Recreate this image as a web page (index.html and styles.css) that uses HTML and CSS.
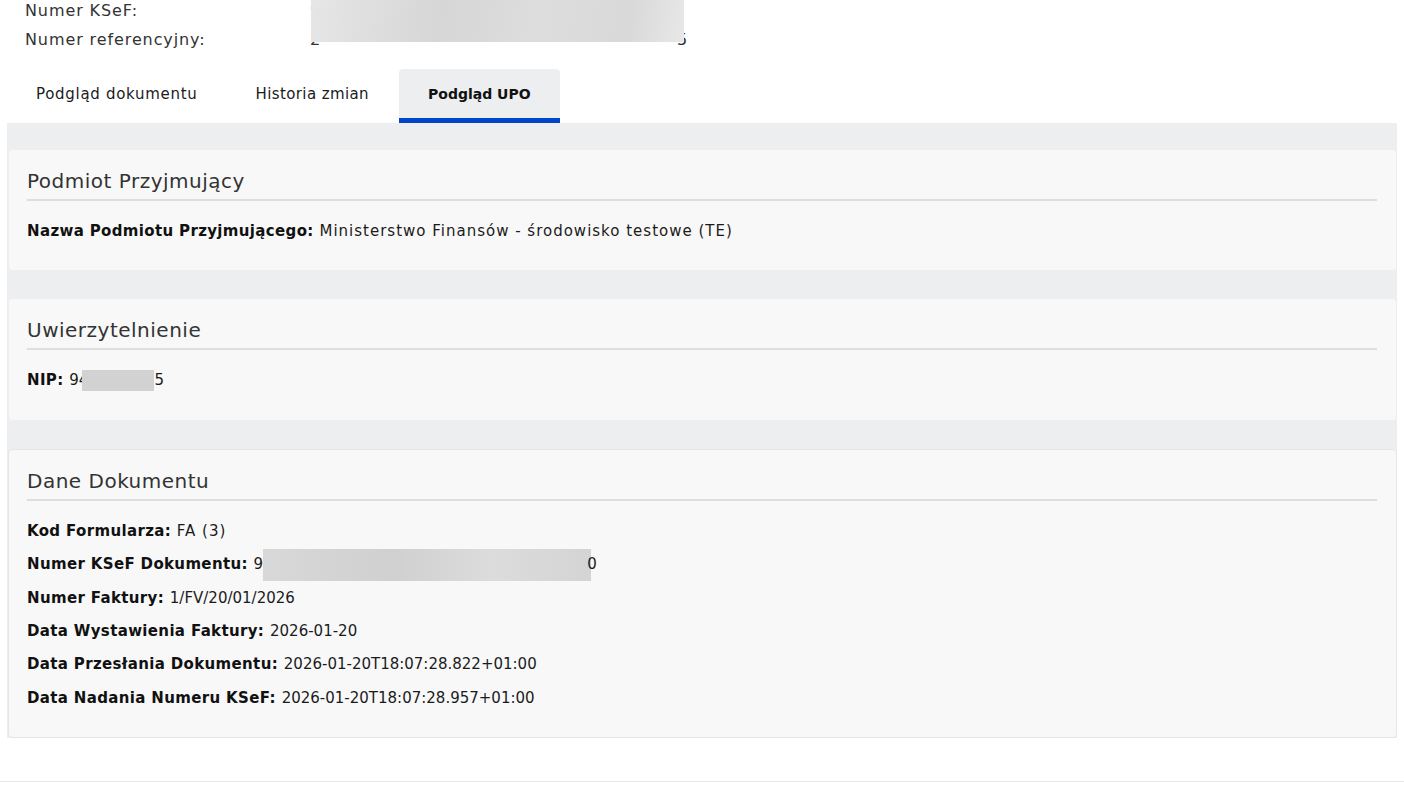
FILE: index.html
```html
<!DOCTYPE html>
<html lang="pl">
<head>
    <meta charset="UTF-8">
    <meta name="viewport" content="width=device-width, initial-scale=1.0">
    <title>Podgląd UPO</title>
    <link rel="stylesheet" href="styles.css">
</head>
<body>
    <div class="meta">
        <div class="meta-row">
            <span class="meta-label">Numer KSeF:</span>
            <span class="meta-value">9</span>
        </div>
        <div class="meta-row">
            <span class="meta-label">Numer referencyjny:</span>
            <span class="meta-value">2<span class="meta-end">5</span></span>
        </div>
        <div class="meta-blur"></div>
    </div>

    <nav class="tabs">
        <a class="tab">Podgląd dokumentu</a>
        <a class="tab">Historia zmian</a>
        <a class="tab active">Podgląd UPO</a>
    </nav>

    <main class="upo">
        <section class="card">
            <h3>Podmiot Przyjmujący</h3>
            <div class="rows">
                <p><b>Nazwa Podmiotu Przyjmującego:</b> Ministerstwo Finansów - środowisko testowe (TE)</p>
            </div>
        </section>
        <section class="card">
            <h3>Uwierzytelnienie</h3>
            <div class="rows">
                <p><b>NIP:</b> <span class="num">94<span class="redact redact-nip"></span>5</span></p>
            </div>
        </section>
        <section class="card last">
            <h3>Dane Dokumentu</h3>
            <div class="rows">
                <p><b>Kod Formularza:</b> FA (3)</p>
                <p><b>Numer KSeF Dokumentu:</b> <span class="num">9<span class="redact redact-ksef"></span>0</span></p>
                <p><b>Numer Faktury:</b> <span class="num">1/FV/20/01/2026</span></p>
                <p><b>Data Wystawienia Faktury:</b> <span class="num">2026-01-20</span></p>
                <p><b>Data Przesłania Dokumentu:</b> <span class="num">2026-01-20T18:07:28.822+01:00</span></p>
                <p><b>Data Nadania Numeru KSeF:</b> <span class="num">2026-01-20T18:07:28.957+01:00</span></p>
            </div>
        </section>
    </main>

    <footer class="foot"></footer>
</body>
</html>
```

FILE: styles.css
```css
body {
    font-family: "DejaVu Sans", "Noto Sans", sans-serif;
    margin: 0;
    color: #1b1b1b;
    background: #fff;
}
.meta {
    position: relative;
    padding: 0 25px;
    height: 58px;
}
.meta-row {
    display: flex;
    font-size: 16px;
    letter-spacing: 0.9px;
    line-height: 29px;
    color: #333;
}
.meta-row:first-child {
    margin-top: -4px;
}
.meta-label {
    width: 285px;
}
.meta-value {
    position: relative;
    width: 378px;
}
.meta-end {
    position: absolute;
    right: 0;
}
.meta-blur {
    position: absolute;
    left: 311px;
    top: 0;
    width: 373px;
    height: 46px;
    background: linear-gradient(100deg, #e6e6e6 0%, #d6d6d6 35%, #dddddd 60%, #d9d9d9 85%, #e8e8e8 100%);
}
.tabs {
    display: flex;
    padding-left: 7px;
    margin-top: 15px;
}
.tab {
    height: 49px;
    padding: 0 29px;
    display: flex;
    align-items: center;
    font-size: 15px;
    letter-spacing: 0.7px;
    color: #1b1b1b;
    cursor: pointer;
    border-bottom: 5px solid transparent;
    border-radius: 4px 4px 0 0;
}
.tab:nth-child(2) {
    padding-right: 30px;
    letter-spacing: 0.4px;
}
.tab.active {
    background: #eceef0;
    border-bottom-color: #0047c8;
    font-size: 14px;
    letter-spacing: 0;
    font-weight: bold;
    color: #111;
}
.upo {
    margin: 0 7px;
    padding-top: 26px;
    background: #eceef0;
}
.card {
    background: #f8f8f8;
    border: 1px solid #eceef0;
    border-radius: 4px;
    padding: 19px 19px 17px 18px;
    margin: 0 0 27px 1px;
}
.card:nth-child(2) {
    margin-bottom: 28px;
}
.card.last {
    margin-bottom: 0;
    border-color: #e6e6e6;
}
.card h3 {
    margin: 0;
    font-size: 20px;
    letter-spacing: 0.5px;
    font-weight: normal;
    line-height: 24px;
    color: #333;
    padding-bottom: 6px;
    border-bottom: 2px solid #dedede;
}
.rows {
    padding-top: 19px;
}
.rows p {
    margin: 0 0 10px;
    font-size: 15px;
    letter-spacing: 1px;
    line-height: 23.4px;
}
.rows b {
    color: #111;
    letter-spacing: 0.35px;
}
.rows .num {
    letter-spacing: 0;
}
.redact {
    display: inline-block;
    vertical-align: middle;
    background: #d2d2d2;
}
.redact-nip {
    width: 72px;
    height: 21px;
    margin-left: -6px;
}
.redact-ksef {
    width: 328px;
    height: 32px;
    margin: -5px -4px -5px 0;
    background: linear-gradient(90deg, #d8d8d8, #d0d0d0 40%, #dcdcdc 70%, #d4d4d4);
}
.foot {
    margin-top: 43px;
    border-top: 1px solid #e6e6e6;
    height: 10px;
}
```
